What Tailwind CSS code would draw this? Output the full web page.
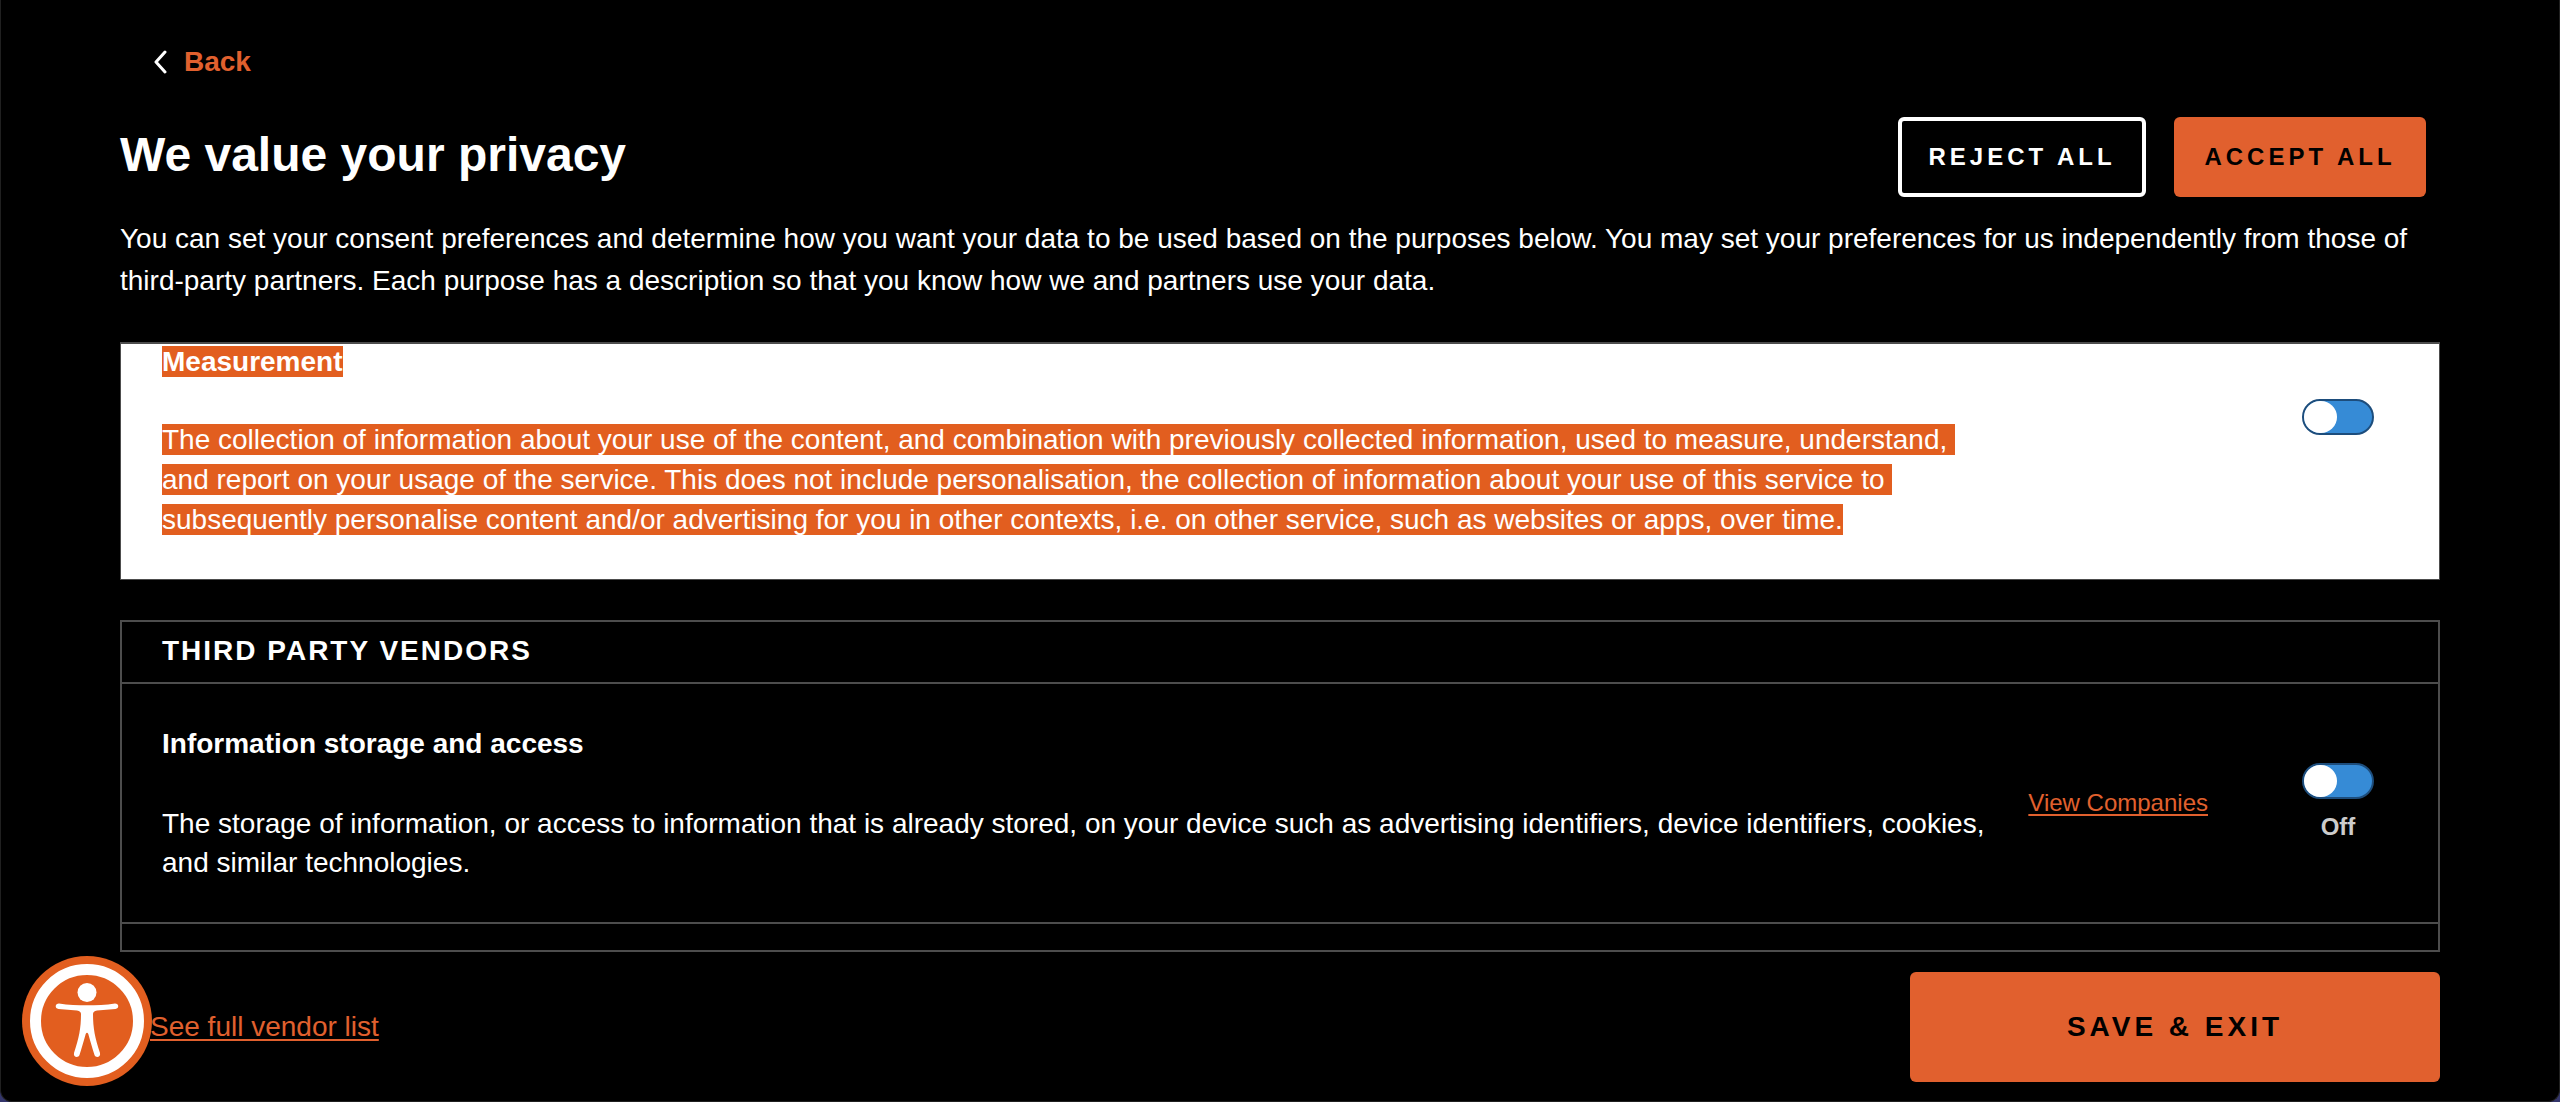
<!DOCTYPE html>
<html lang="en">
<head>
<meta charset="utf-8">
<title>We value your privacy</title>
<script src="https://cdn.jsdelivr.net/npm/@tailwindcss/browser@4"></script>
</head>
<body class="bg-[#34366b]">
<main class="flex min-h-screen flex-col overflow-hidden rounded-b-xl border-x border-b border-[#202020] bg-black px-[119px] pb-[19px] pt-[42px] font-['Liberation_Sans',Arial,sans-serif] text-[28px] text-white">
  <nav class="flex pl-8">
    <a href="#" class="flex items-center gap-4 font-bold leading-10 text-[#e1602e]">
      <svg class="h-6 w-4" viewBox="0 0 16 24" fill="none" stroke="#fff" stroke-width="3" stroke-linecap="round" stroke-linejoin="round"><path d="M13 2 4 12 13 22"/></svg>
      Back
    </a>
  </nav>

  <header class="mt-[35px] flex items-center justify-between pr-3.5">
    <h1 class="pb-1 text-5xl font-bold">We value your privacy</h1>
    <div class="flex gap-7">
      <button type="button" class="h-20 w-[248px] rounded-md border-4 border-white text-2xl font-bold tracking-[4px]">REJECT ALL</button>
      <button type="button" class="h-20 w-[252px] rounded-md bg-[#e1602e] text-2xl font-bold tracking-[4px] text-black">ACCEPT ALL</button>
    </div>
  </header>

  <p class="mt-[21px] leading-[42px]">You can set your consent preferences and determine how you want your data to be used based on the purposes below. You may set your preferences for us independently from those of third-party partners. Each purpose has a description so that you know how we and partners use your data.</p>

  <section class="mt-10 flex border border-t-2 border-[#4d4d4d] bg-white pl-[41px] pr-[65px]">
    <div class="w-[1828px] shrink pb-[39px]">
      <h2 class="font-bold leading-9"><span class="bg-[#e25e1f]">Measurement</span></h2>
      <p class="mt-10 whitespace-pre-wrap leading-10"><span class="bg-[#e25e1f]">The collection of information about your use of the content, and combination with previously collected information, used to measure, understand, and report on your usage of the service. This does not include personalisation, the collection of information about your use of this service to subsequently personalise content and/or advertising for you in other contexts, i.e. on other service, such as websites or apps, over time.</span></p>
    </div>
    <label class="relative ml-auto mt-[55px] block h-9 w-[72px] shrink-0">
      <input type="checkbox" aria-label="Measurement" class="peer absolute inset-0 m-0 h-9 w-[72px] appearance-none rounded-full border-2 border-[#1d4d7c] bg-[#368bd6]">
      <span class="absolute left-0.5 top-0.5 h-8 w-[33px] rounded-full bg-white peer-checked:left-[37px]"></span>
    </label>
  </section>

  <section class="mt-10 border-2 border-[#4d4d4d]">
    <h2 class="border-b-2 border-[#4d4d4d] px-10 pb-[11px] pt-[9px] font-bold leading-10 tracking-[2px]">THIRD PARTY VENDORS</h2>
    <div class="flex items-center border-b-2 border-[#4d4d4d] pl-10 pr-16">
      <div class="w-[1828px] shrink pb-10 pt-10">
        <h3 class="font-bold leading-10">Information storage and access</h3>
        <p class="mt-10 leading-[39px]">The storage of information, or access to information that is already stored, on your device such as advertising identifiers, device identifiers, cookies, and similar technologies.</p>
      </div>
      <a href="#" class="ml-auto mr-[94px] shrink-0 text-2xl text-[#e1602e] underline decoration-2 underline-offset-[3px] [text-decoration-skip-ink:none]">View Companies</a>
      <label class="flex shrink-0 flex-col items-center gap-3 text-2xl font-bold leading-8 text-[#ccc]">
        <span class="relative block h-9 w-[72px]">
          <input type="checkbox" class="peer absolute inset-0 m-0 h-9 w-[72px] appearance-none rounded-full border-2 border-[#1d4d7c] bg-[#368bd6]">
          <span class="absolute left-0.5 top-0.5 h-8 w-[33px] rounded-full bg-white peer-checked:left-[37px]"></span>
        </span>
        Off
      </label>
    </div>
    <div class="h-[26px]"></div>
  </section>

  <footer class="mt-5 flex items-center justify-between pl-[30px]">
    <a href="#" class="text-[#e1602e] underline decoration-2 underline-offset-[3px]">See full vendor list</a>
    <button type="button" class="h-[110px] w-[530px] rounded-md bg-[#e1602e] font-bold tracking-[4px] text-black">SAVE &amp; EXIT</button>
  </footer>
</main>

<button type="button" aria-label="Accessibility" class="fixed bottom-4 left-[22px] size-[130px]">
  <svg class="size-full" viewBox="0 0 130 130">
    <circle cx="65" cy="65" r="65" fill="#e25e1f"/>
    <circle cx="65" cy="65" r="51.5" fill="none" stroke="#fff" stroke-width="11"/>
    <g fill="#fff"><circle cx="65" cy="36.500" r="9.500"/>
    <path d="M37 47.500 C46 49 56 49.300 65 49.300 S84 49 93 47.500 C97 47.500 97.500 52.500 93.500 53 L75 54.500 Q71 55 71 58 C71 72 73 82 78 97 C79 101 74 102.500 72.500 99 C70 91 68 84 66.300 78 Q65 75.500 63.700 78 C62 84 60 91 57.500 99 C56 102.500 51 101 52 97 C57 82 59 72 59 58 Q59 55 55 54.500 L36.500 53 C32.500 52.500 33 47.500 37 47.500Z"/></g>
  </svg>
</button>
</body>
</html>
